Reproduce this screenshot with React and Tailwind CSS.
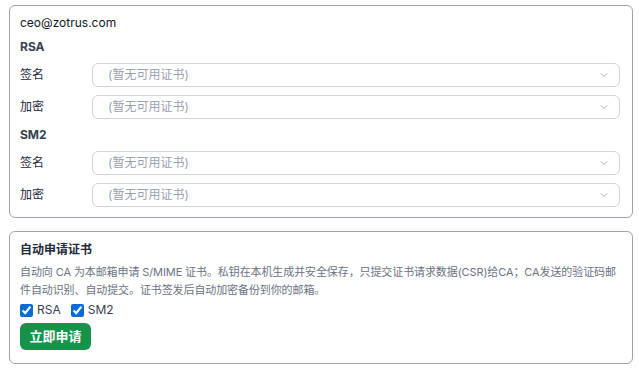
import React from 'react'

function ChevronDown() {
  return (
    <svg className="w-[10px] h-[10px] text-gray-400" viewBox="0 0 16 16" fill="none" stroke="currentColor" strokeWidth={1.5}>
      <path strokeLinecap="round" strokeLinejoin="round" d="M3.5 6l4.5 4.5L12.5 6" />
    </svg>
  )
}

function CertRow({ label }) {
  return (
    <div className="flex items-center h-6">
      <span className="w-[72px] text-[12px] text-gray-800">{label}</span>
      <div className="flex-1 h-6 flex items-center justify-between rounded-md border border-[#d4d6db] pl-[15px] pr-[10px] bg-white">
        <span className="text-[12px] text-gray-400">(暂无可用证书)</span>
        <ChevronDown />
      </div>
    </div>
  )
}

export default function App() {
  return (
    <div
      className="bg-white pt-[5px] pl-[9px] pr-[6px] flex flex-col gap-[13px]"
      style={{ fontFamily: 'Inter, "Noto Sans CJK SC", sans-serif' }}
    >
      {/* certificates */}
      <div className="h-[213px] rounded-md border border-[#9ea3ab] pl-[10px] pr-[12px] pt-[10px]">
        <div className="text-[12px] text-gray-900 leading-[14px]">ceo@zotrus.com</div>
        <div className="text-[12px] font-bold text-gray-700 mt-[10px] leading-[14px]">RSA</div>
        <div className="flex flex-col gap-2 mt-[9px]">
          <CertRow label="签名" />
          <CertRow label="加密" />
        </div>
        <div className="text-[12px] font-bold text-gray-700 mt-[9px] leading-[14px]">SM2</div>
        <div className="flex flex-col gap-2 mt-[9px]">
          <CertRow label="签名" />
          <CertRow label="加密" />
        </div>
      </div>

      {/* auto request */}
      <div className="h-[133px] rounded-md border border-[#9ea3ab] pl-[10px] pr-[6px] pt-[10px]">
        <div className="text-[12px] font-bold text-gray-800 leading-[16px]">自动申请证书</div>
        <p className="text-[11px] text-gray-500 leading-[18px] mt-[5px] tracking-[-0.1px]">
          自动向 CA 为本邮箱申请 S/MIME 证书。私钥在本机生成并安全保存，只提交证书请求数据(CSR)给CA；CA发送的验证码邮件自动识别、自动提交。证书签发后自动加密备份到你的邮箱。
        </p>
        <div className="flex items-center gap-[10px] mt-[1px] h-[20px] text-[12px] text-gray-700">
          <label className="flex items-center gap-[4px]">
            <input type="checkbox" defaultChecked className="w-[13px] h-[13px] m-0 accent-[#0b6bd6]" />
            RSA
          </label>
          <label className="flex items-center gap-[4px]">
            <input type="checkbox" defaultChecked className="w-[13px] h-[13px] m-0 accent-[#0b6bd6]" />
            SM2
          </label>
        </div>
        <button className="mt-[3px] h-[27px] w-[71px] rounded-md bg-[#16924b] text-white text-[13px] font-bold">
          立即申请
        </button>
      </div>
    </div>
  )
}
